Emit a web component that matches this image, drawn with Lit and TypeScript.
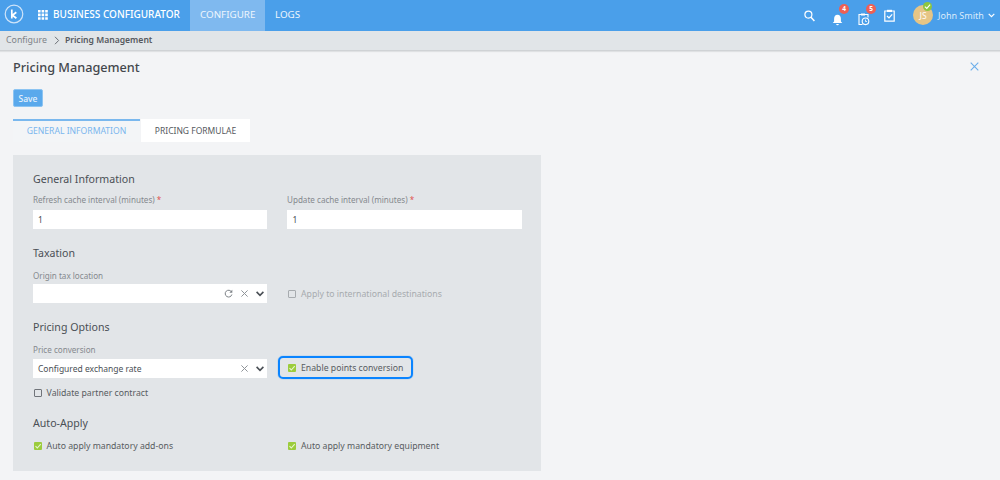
import { LitElement, html, css, svg } from "lit";
import { customElement } from "lit/decorators.js";

const check = svg`<svg class="tick" viewBox="0 0 8 8" width="8" height="8"><path d="M1.500 4.200 3.300 6 6.700 2.200" fill="none" stroke="#e8f5d0" stroke-width="1.100"/></svg>`;
const chevron = html`<svg class="chev" viewBox="0 0 8 6" width="8" height="6"><path d="M.6.900 4 4.300 7.400.900" fill="none" stroke="#4a4f55" stroke-width="1.600"/></svg>`;
const cross = html`<svg class="x" viewBox="0 0 7 7" width="7" height="7"><path d="M.4.400l6.200 6.200M6.600.400.400 6.600" fill="none" stroke="#8f9499" stroke-width="1"/></svg>`;

@customElement("app-root")
export class AppRoot extends LitElement {
  static styles = css`
    :host { display: block; width: 1000px; height: 480px; overflow: hidden; background: #f3f4f6; font-family: "Noto Sans", "Open Sans", sans-serif; color: #4a4f55; }
    * { box-sizing: border-box; }
    .top { height: 31px; background: #4a9fea; display: flex; align-items: stretch; color: #fff; }
    .logo { margin: 4px 0 0 4px; width: 20px; height: 20px; }
    .grid { margin: 10px 0 0 14px; width: 10px; height: 10px; }
    .brand { margin-left: 5px; font-size: 10px; font-weight: 500; line-height: 29px; width: 137px; white-space: nowrap; color: #fff; }
    .nav { font-size: 9.8px; line-height: 29px; padding: 0 10px; white-space: nowrap; color: #eef6fd; }
    .nav.on { background: #7fb9ef; width: 75px; }
    .right { margin-left: auto; display: flex; align-items: center; height: 31px; position: relative; }
    .ic { display: block; position: relative; }
    .search { margin-right: 17px; }
    .bell { width: 12px; height: 14px; margin-right: 14px; }
    .clip { width: 12px; height: 14px; margin-right: 14px; }
    .list { margin-right: 18px; }
    .badge { position: absolute; width: 10px; height: 10px; border-radius: 50%; background: #ee6055; color: #fff; font-size: 6.5px; font-weight: 700; line-height: 10px; text-align: center; }
    .b4 { left: 7px; top: -5px; }
    .b5 { left: 8px; top: -5px; }
    .avatar { width: 20px; height: 20px; border-radius: 50%; background: #e6c586; font-size: 8.5px; font-weight: 500; line-height: 21px; text-align: center; position: relative; margin-bottom: 1px; color: #fdf8ee; }
    .status { position: absolute; left: 10px; top: -3px; width: 9px; height: 9px; border-radius: 50%; background: #8dc63f; display: flex; align-items: center; justify-content: center; }
    .user { font-size: 9px; margin-left: 5px; color: #dcebfb; white-space: nowrap; width: 45px; }
    .caret { margin: 0 5px 0 5px; }
    .crumb { height: 20px; background: #e1e5e8; border-bottom: 1px solid #cfd2d5; box-shadow: 0 1px 1px #dfe1e3; display: flex; align-items: center; padding: 0 0 1px 6px; font-size: 8.8px; color: #7d8287; }
    .crumb b { font-size: 8.6px; font-weight: 600; color: #55595e; margin-left: 5px; }
    .crumb svg { margin-left: 7px; }
    .page { padding: 0 13px; position: relative; }
    h1 { font-size: 12.7px; font-weight: 500; margin: 0; line-height: 20px; padding-top: 6px; height: 38px; color: #43474c; }
    .close { position: absolute; right: 21px; top: 11px; }
    .save { display: block; width: 30px; height: 18px; background: #5aa9ec; border: 1px solid #8cc4f2; border-radius: 2px; color: #e8f3fd; font: 500 8.5px/15px "Noto Sans", sans-serif; padding: 0; text-align: center; }
    .tabs { display: flex; gap: 1px; margin-top: 12px; height: 23px; }
    .tab { font-size: 8.5px; line-height: 22px; text-align: center; background: #fff; color: #55595e; width: 109px; padding-top: 1px; }
    .tab.on { width: 127px; background: #f3f5f7; color: #7ab6ee; border-top: 2px solid #7ab8ee; padding-top: 0; line-height: 21px; font-size: 8.6px; }
    .panel { width: 528px; height: 316px; background: #e2e5e8; margin-top: 13px; padding: 17px 20px 0; }
    h2 { font-size: 10.6px; font-weight: 400; line-height: 15px; margin: 0; color: #4a4f55; }
    .row { display: grid; grid-template-columns: 234.4px 234.6px; gap: 20px; align-items: end; }
    label.f { display: block; font-size: 8.1px; line-height: 12px; color: #85898e; margin-bottom: 4px; white-space: nowrap; }
    label.tight { margin-bottom: 2px; }
    label.mid { margin-bottom: 3px; }
    label.back { margin-left: -0.4px; }
    .req { color: #e0524d; }
    .input { background: #fff; height: 19px; font-size: 8.5px; line-height: 19px; padding-left: 5px; display: flex; align-items: center; color: #4a4f55; }
    .tools { margin-left: auto; display: flex; align-items: center; gap: 8px; padding-right: 3px; }
    .cb { display: flex; align-items: center; font-size: 8.7px; color: #585c61; white-space: nowrap; height: 19px; }
    .box { width: 8px; height: 8px; margin-right: 4.600px; border: 1px solid #70747a; border-radius: 1px; flex: none; margin-left: 1px; }
    .box.on { background: #9ccc3c; border: 0; display: flex; align-items: center; justify-content: center; }
    .tick { display: block; }
    .dis { color: #a7abaf; }
    .dis .box { border-color: #a7abaf; }
    .focus { width: 135px; height: 23px; margin: 0 0 -1px -9px; padding-left: 7px; border: 2px solid #0a84ff; border-radius: 5px; box-shadow: 0 0 1px #0a84ff; }
    .r1 { margin-top: 7px; }
    .sec2 { margin-top: 17px; }
    .r2 { margin-top: 9px; }
    .sec3 { margin-top: 17px; }
    .r3 { margin-top: 9px; }
    .val { margin-top: 5px; }
    .sec4 { margin-top: 14px; }
    .r4 { margin-top: 5px; }
  `;

  private cb(text: string, on = false, cls = "") {
    return html`<div class="cb ${cls}"><span class="box ${on ? "on" : ""}">${on ? check : ""}</span>${text}</div>`;
  }

  render() {
    return html`
      <div class="top">
        <svg class="logo" viewBox="0 0 20 20"><circle cx="10" cy="10" r="8.800" fill="none" stroke="#cfe4f9" stroke-width="1.200"/><path d="M7.800 5.500v9M12.300 8.300 8.400 11.200l4 3" fill="none" stroke="#fff" stroke-width="1.700"/></svg>
        <svg class="grid" viewBox="0 0 10 10" fill="#fff"><path d="M0 0h2.600v2.600H0zM3.600 0h2.600v2.600H3.600zM7.200 0h2.600v2.600H7.200zM0 3.600h2.600v2.600H0zM3.600 3.600h2.600v2.600H3.600zM7.200 3.600h2.600v2.600H7.200zM0 7.200h2.600v2.600H0zM3.600 7.200h2.600v2.600H3.600zM7.200 7.200h2.600v2.600H7.200z"/></svg>
        <div class="brand">BUSINESS CONFIGURATOR</div>
        <div class="nav on">CONFIGURE</div>
        <div class="nav">LOGS</div>
        <div class="right">
          <svg class="ic search" width="11" height="12" viewBox="0 0 11 12"><circle cx="4.400" cy="4.600" r="3.500" fill="none" stroke="#fff" stroke-width="1.200"/><path d="M7 7.300l3.400 3.800" stroke="#fff" stroke-width="1.500"/></svg>
          <div class="ic bell">
            <svg width="11" height="12" viewBox="0 0 11 12"><path d="M5.500.8c2.400 0 3.400 1.800 3.400 4v2.600l1.400 1.600H.7l1.400-1.600V4.800c0-2.200 1-4 3.400-4z" fill="#fff"/><path d="M4.200 10h2.600a1.300 1.300 0 0 1-2.600 0z" fill="#fff"/></svg>
            <span class="badge b4">4</span>
          </div>
          <div class="ic clip">
            <svg width="12" height="13" viewBox="0 0 12 13"><path d="M5 1.500H1v10h3.500M7 1.500h3v3" fill="none" stroke="#fff" stroke-width="1.100"/><rect x="3" y=".5" width="4" height="2" fill="#fff"/><circle cx="7.500" cy="8.300" r="3.300" fill="none" stroke="#fff" stroke-width="1.100"/><path d="M7.500 6.500v2h1.500" fill="none" stroke="#fff" stroke-width=".8"/></svg>
            <span class="badge b5">5</span>
          </div>
          <svg class="ic list" width="11" height="13" viewBox="0 0 11 13"><path d="M3 2H.8v10.200h9.400V2H8" fill="none" stroke="#fff" stroke-width="1.200"/><rect x="3" y=".8" width="5" height="2.200" fill="#fff"/><path d="M3 7l2 2 3.200-3.600" fill="none" stroke="#fff" stroke-width="1.200"/></svg>
          <div class="avatar">JS<span class="status"><svg viewBox="0 0 8 8" width="7" height="7"><path d="M1 4.200 3.200 6.200 7 1.800" fill="none" stroke="#fff" stroke-width="1.300"/></svg></span></div>
          <div class="user">John Smith</div>
          <svg class="caret" width="7" height="5" viewBox="0 0 7 5"><path d="M.7.800 3.500 3.600 6.300.800" fill="none" stroke="#fff" stroke-width="1.200"/></svg>
        </div>
      </div>
      <div class="crumb">Configure<svg width="6" height="9" viewBox="0 0 6 9"><path d="M1 .8 4.600 4.500 1 8.200" fill="none" stroke="#6a6f74" stroke-width="1"/></svg><b>Pricing Management</b></div>
      <div class="page">
        <h1>Pricing Management</h1>
        <svg class="close" width="9" height="9" viewBox="0 0 9 9"><path d="M.7.700l7.600 7.600M8.300.700.700 8.300" fill="none" stroke="#6aaeea" stroke-width="1.100"/></svg>
        <button class="save">Save</button>
        <div class="tabs"><div class="tab on">GENERAL INFORMATION</div><div class="tab">PRICING FORMULAE</div></div>
        <div class="panel">
          <h2>General Information</h2>
          <div class="row r1">
            <div><label class="f">Refresh cache interval (minutes) <span class="req">*</span></label><div class="input">1</div></div>
            <div><label class="f back">Update cache interval (minutes) <span class="req">*</span></label><div class="input">1</div></div>
          </div>
          <h2 class="sec2">Taxation</h2>
          <div class="row r2">
            <div><label class="f tight">Origin tax location</label><div class="input"><span class="tools">
              <svg width="9" height="9" viewBox="0 0 9 9"><path d="M7.600 3A3.400 3.400 0 1 0 7.900 5.500" fill="none" stroke="#7d8287" stroke-width="1"/><path d="M8.300.8v3H5.400z" fill="#7d8287"/></svg>${cross}${chevron}</span></div></div>
            ${this.cb("Apply to international destinations", false, "dis")}
          </div>
          <h2 class="sec3">Pricing Options</h2>
          <div class="row r3">
            <div><label class="f mid">Price conversion</label><div class="input">Configured exchange rate<span class="tools">${cross}${chevron}</span></div></div>
            ${this.cb("Enable points conversion", true, "focus")}
          </div>
          <div class="val">${this.cb("Validate partner contract")}</div>
          <h2 class="sec4">Auto-Apply</h2>
          <div class="row r4">
            ${this.cb("Auto apply mandatory add-ons", true)}
            ${this.cb("Auto apply mandatory equipment", true)}
          </div>
        </div>
      </div>
    `;
  }
}
